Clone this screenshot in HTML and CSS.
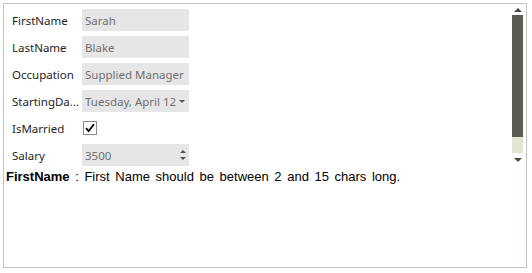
FILE: index.html
```html
<!DOCTYPE html>
<html lang="en">
<head>
    <meta charset="UTF-8">
    <title>Person form</title>
    <link rel="stylesheet" href="styles.css">
</head>
<body>
    <div class="cadre">
        <div class="defile">
            <div class="formulaire">
                <div class="ligne">
                    <span class="libelle">FirstName</span>
                    <div class="champ">Sarah</div>
                </div>
                <div class="ligne">
                    <span class="libelle">LastName</span>
                    <div class="champ">Blake</div>
                </div>
                <div class="ligne">
                    <span class="libelle">Occupation</span>
                    <div class="champ">Supplied Manager</div>
                </div>
                <div class="ligne">
                    <span class="libelle">StartingDa...</span>
                    <div class="champ date">
                        <span class="valeur">Tuesday, April 12</span>
                        <span class="fleche-bas"></span>
                    </div>
                </div>
                <div class="ligne">
                    <span class="libelle">IsMarried</span>
                    <div class="case">
                        <svg width="12" height="12" viewBox="0 0 12 12">
                            <path d="M2 6.2 L4.6 9 L10 2.2" fill="none" stroke="#000" stroke-width="1.8"/>
                        </svg>
                    </div>
                </div>
                <div class="ligne">
                    <span class="libelle">Salary</span>
                    <div class="champ spin">
                        <span class="valeur">3500</span>
                        <span class="fleches">
                            <span class="fleche-haut"></span>
                            <span class="fleche-bas"></span>
                        </span>
                    </div>
                </div>
            </div>
            <div class="barre">
                <span class="fleche-haut sombre"></span>
                <div class="piste">
                    <div class="pouce"></div>
                </div>
                <span class="fleche-bas sombre"></span>
            </div>
        </div>
        <p class="erreur"><b>FirstName</b> : First Name should be between 2 and 15 chars long.</p>
    </div>
</body>
</html>
```

FILE: styles.css
```css
*{
    padding: 0;
    margin: 0;
    box-sizing: border-box;
}
body{
    background-color: #ffffff;
    font-family: "Noto Sans", sans-serif;
}
.cadre{
    margin: 3px 0 0 3px;
    width: 524px;
    height: 265px;
    border: 1px solid #c4c4bc;
}
.defile{
    display: flex;
    height: 162px;
}
.formulaire{
    flex: 1;
    display: flex;
    flex-direction: column;
    gap: 5px;
    padding: 5px 0 0 8px;
}
.ligne{
    display: flex;
    align-items: center;
    height: 22px;
}
.libelle{
    width: 70px;
    font-size: 11.5px;
    color: #1e1e1e;
}
.champ{
    width: 107px;
    height: 22px;
    background-color: #e6e6e6;
    color: #6f6f6f;
    font-size: 11.5px;
    display: flex;
    align-items: center;
    padding-left: 3px;
}
.valeur{
    white-space: nowrap;
    overflow: hidden;
    width: 91px;
}
.fleche-bas, .fleche-haut{
    display: block;
    width: 0;
    height: 0;
    border-left: 3px solid transparent;
    border-right: 3px solid transparent;
}
.fleche-bas{
    border-top: 3px solid #555;
}
.fleche-haut{
    border-bottom: 3px solid #555;
}
.date .fleche-bas{
    margin-left: 3px;
}
.fleches{
    display: flex;
    flex-direction: column;
    gap: 4px;
    margin-left: 4px;
}
.case{
    margin-left: 1px;
    width: 14px;
    height: 14px;
    border: 1px solid #8c8c8c;
    display: flex;
    align-items: center;
    justify-content: center;
}
.barre{
    width: 11px;
    margin: 0 3px 0 0;
    display: flex;
    flex-direction: column;
    align-items: center;
    padding-top: 4px;
}
.sombre{
    border-left-width: 4px;
    border-right-width: 4px;
    border-bottom-color: #4a4a44;
    border-top-color: #4a4a44;
}
.fleche-haut.sombre{
    border-bottom-width: 4px;
}
.fleche-bas.sombre{
    border-top-width: 4px;
}
.piste{
    width: 11px;
    height: 138px;
    margin: 3px 0 5px;
    background-color: #e2e4d4;
}
.pouce{
    height: 122px;
    background-color: #5b5b54;
}
.erreur{
    font-family: "Liberation Sans", Arial, sans-serif;
    font-size: 13px;
    word-spacing: 2px;
    padding-left: 2px;
    line-height: 15px;
    margin-top: 3px;
    color: #000;
}
.erreur b{
    word-spacing: 0;
}
```
